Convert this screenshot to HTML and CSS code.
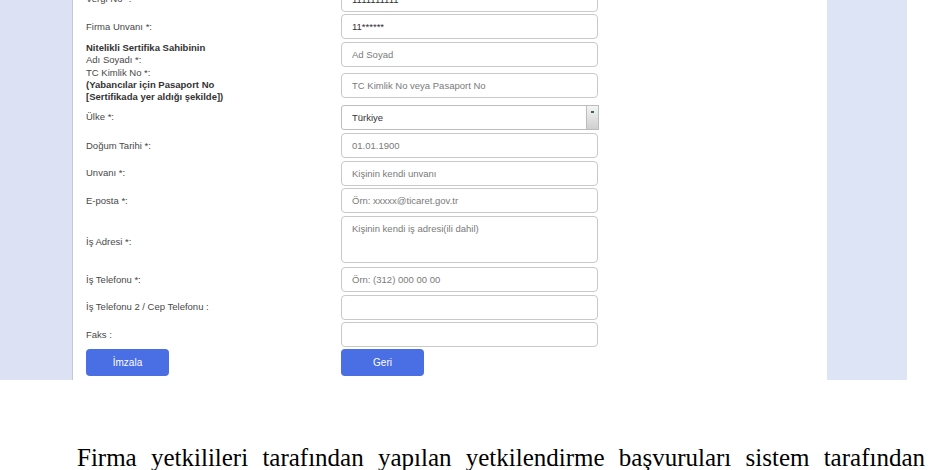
FILE: index.html
```html
<!DOCTYPE html>
<html lang="tr">
<head>
<meta charset="utf-8">
<title>Form</title>
<link rel="stylesheet" href="styles.css">
</head>
<body>
<div class="shot">
  <div class="side side-left"></div>
  <div class="panel">
    <div class="form">
      <div class="row r0">
        <div class="label">Vergi No *:</div>
        <div class="field value">1111111111</div>
      </div>
      <div class="row">
        <div class="label">Firma Unvanı *:</div>
        <div class="field value">11******</div>
      </div>
      <div class="row">
        <div class="label"><b>Nitelikli Sertifika Sahibinin</b><br>Adı Soyadı *:</div>
        <div class="field">Ad Soyad</div>
      </div>
      <div class="row r-tc">
        <div class="label">TC Kimlik No *:<br><b>(Yabancılar için Pasaport No<br>[Sertifikada yer aldığı şekilde])</b></div>
        <div class="field">TC Kimlik No veya Pasaport No</div>
      </div>
      <div class="row r-ulke">
        <div class="label">Ülke *:</div>
        <div class="field select value">Türkiye<span class="arrow"><span class="tri"></span></span></div>
      </div>
      <div class="row r-dogum">
        <div class="label">Doğum Tarihi *:</div>
        <div class="field">01.01.1900</div>
      </div>
      <div class="row">
        <div class="label">Unvanı *:</div>
        <div class="field">Kişinin kendi unvanı</div>
      </div>
      <div class="row">
        <div class="label">E-posta *:</div>
        <div class="field">Örn: xxxxx@ticaret.gov.tr</div>
      </div>
      <div class="row r-adres">
        <div class="label label-adres">İş Adresi *:</div>
        <div class="field area">Kişinin kendi iş adresi(ili dahil)</div>
      </div>
      <div class="row r-tel">
        <div class="label">İş Telefonu *:</div>
        <div class="field">Örn: (312) 000 00 00</div>
      </div>
      <div class="row">
        <div class="label">İş Telefonu 2 / Cep Telefonu :</div>
        <div class="field"></div>
      </div>
      <div class="row">
        <div class="label">Faks :</div>
        <div class="field"></div>
      </div>
      <div class="row r-btn">
        <div class="label"><span class="btn">İmzala</span></div>
        <span class="btn">Geri</span>
      </div>
    </div>
  </div>
  <div class="side side-right"></div>
</div>
<p class="doc">Firma yetkilileri tarafından yapılan yetkilendirme başvuruları sistem tarafından</p>
</body>
</html>
```
FILE: styles.css
```css
html, body {
  margin: 0;
  padding: 0;
  background: #ffffff;
}
body {
  width: 930px;
  height: 470px;
  overflow: hidden;
}
.shot {
  display: flex;
  width: 907px;
  height: 380px;
  overflow: hidden;
  background: #dde3f4;
}
.side-left {
  width: 72px;
  background: #dce2f3;
  border-right: 1px solid #c4c8d6;
}
.side-right {
  width: 80px;
  background: #dde4f6;
}
.panel {
  width: 754px;
  background: #ffffff;
  overflow: hidden;
}
.form {
  display: flex;
  flex-direction: column;
  padding-left: 13px;
  margin-top: -13.5px;
  font-family: "Liberation Sans", Arial, sans-serif;
  font-size: 9.5px;
  color: #484848;
}
.row {
  display: flex;
  align-items: center;
  min-height: 25px;
  margin-top: 2.5px;
}
.r0 { margin-top: 0; }
.r-tc { margin-top: 0; height: 37px; }
.r-ulke { margin-top: 1px; }
.r-dogum { margin-top: 3.5px; }
.r-adres { margin-top: 2.5px; height: 47px; }
.r-tel { margin-top: 4.5px; }
.r-btn { margin-top: 2px; height: 27px; }
.label {
  width: 255px;
  line-height: 12px;
  flex: none;
}
.label b {
  font-weight: bold;
  color: #333;
}
.label-adres {
  padding-top: 6px;
}
.field {
  box-sizing: border-box;
  width: 257px;
  height: 25px;
  border: 1px solid #c9c9c9;
  border-radius: 4px;
  padding: 0 10px;
  display: flex;
  align-items: center;
  color: #7a7a7a;
  background: #fff;
}
.value {
  color: #333;
}
.area {
  height: 47px;
  align-items: flex-start;
  padding-top: 6px;
}
.select {
  position: relative;
  width: 258px;
  border-radius: 3px 0 0 3px;
  border-color: #bdbdbd;
}
.arrow {
  position: absolute;
  right: -1px;
  top: -1px;
  width: 13px;
  height: 25px;
  box-sizing: border-box;
  border: 1px solid #bcbcbc;
  background: linear-gradient(#f4f4f4, #cfcfcf);
}
.tri {
  position: absolute;
  left: 4px;
  top: 5px;
  width: 3px;
  height: 2px;
  background: #3f5f66;
}
.btn {
  display: flex;
  align-items: center;
  justify-content: center;
  width: 83px;
  height: 27px;
  border-radius: 4px;
  background: #4a6ee3;
  color: #ffffff;
  font-size: 10px;
}
.doc {
  margin: 64px 0 0 41px;
  width: 884px;
  text-indent: 36px;
  font-family: "Liberation Serif", "Times New Roman", serif;
  font-size: 25px;
  color: #000;
  text-align: justify;
  text-align-last: justify;
}
```
